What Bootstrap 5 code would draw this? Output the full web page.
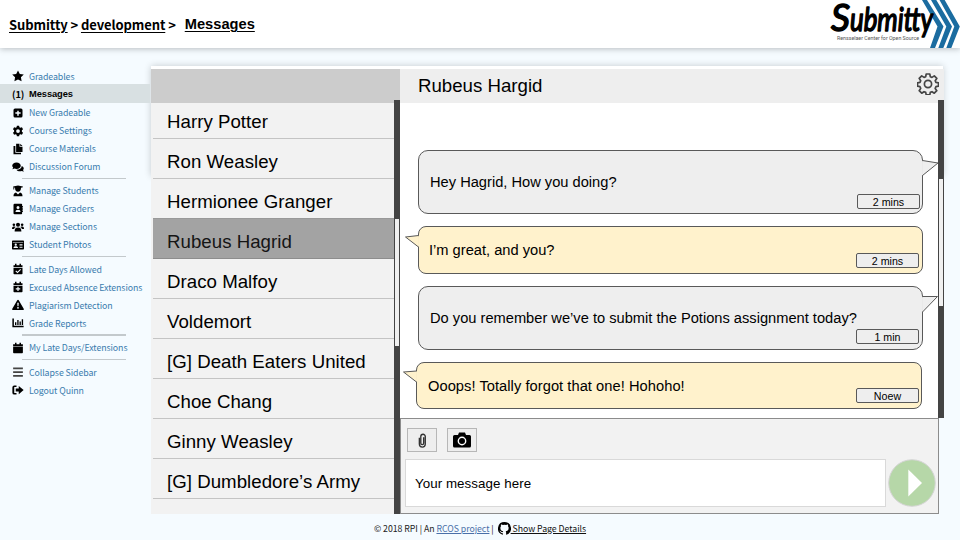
<!DOCTYPE html>
<html lang="en">
<head>
<meta charset="utf-8">
<title>Submitty - Messages</title>
<link href="https://cdn.jsdelivr.net/npm/bootstrap@5.3.0/dist/css/bootstrap.min.css" rel="stylesheet">
<style>
  body{width:960px;height:540px;overflow:hidden;background:#f5fbff;color:#000;font-family:"Liberation Sans",Arial,sans-serif}
  .topbar{height:48px;background:#fff;box-shadow:0 1px 6px rgba(0,0,0,.25);padding-left:9px;font-weight:700}
  .crumbs{font-family:"Noto Sans CJK SC",sans-serif;font-size:13px;letter-spacing:-.09px;line-height:20px;white-space:pre;padding-top:1px}
  .crumbs a,.here{color:#000;text-decoration:underline;text-underline-offset:2px;text-decoration-thickness:1.3px}
  .here{font-size:14.67px;line-height:20px;margin-left:9px}
  .brand{width:132px;height:48px;overflow:visible}
  .side{width:150px;padding-top:19px;flex:none}
  .side a{height:18px;padding:1px 0 0 12px;gap:5px;color:#3a7cae;text-decoration:none;font:8.8px/17px "Noto Sans CJK SC",sans-serif;letter-spacing:-.08px;white-space:nowrap}
  .side a:first-child{height:17px}
  .side a svg{width:12px;height:12px;flex:none;fill:#000}
  .side a.current{background:#d8e0e2;color:#000;font:700 9.33px/18px "Liberation Sans",sans-serif;height:19px;padding-top:0}
  .side a.current span:first-child{width:12px;font-family:"Noto Sans CJK SC",sans-serif}
  .rule{height:6.4px;margin-left:21.5px;width:104.5px;display:flex;align-items:center}
  .rule::before{content:"";width:100%;height:1.2px;background:#c3c9cc}
  .panel{width:793px;height:448px;margin:18px 0 0 1px;padding-top:3px;background:linear-gradient(#fff,#fff) 0 0/792px 4px no-repeat}
  .contacts{width:249px;background:#f2f2f2}
  .panel-shade{box-shadow:0 0 7px rgba(0,0,0,.2);height:110px;width:792px;left:151px;top:66px;z-index:-1}
  .blank{height:34px;background:#ccc}
  .names{padding-left:2px;width:243px}
  .names div{height:40px;border-bottom:1px solid #c4c4c4;padding:4px 0 0 14px;font-size:18.67px;letter-spacing:.03px;line-height:38px;white-space:nowrap}
  .names div:first-child{height:36px;padding-top:0}
  .names .picked{background:#a3a3a3;border-color:#8d8d8d;color:#151515;box-shadow:0 -1px #999}
  .track{width:6px;background:#444;border-left:1px solid #444;border-right:1px solid #444}
  .thumb{height:127px;background:#f0f0f0}
  .track.left{height:414px;margin-top:-3px;padding-top:119px}
  .track.right{height:318px;margin-top:-3px;padding-top:79px}
  .chat-head{height:34px;background:#eee;padding:0 5px 4px 18px;font-size:18.67px}
  .chat-head span{padding-top:4px}
  .stream{width:538px;height:315px;background:#fff;padding:47px 0 0 18px}
  .bubble{width:505px;border:1px solid #595959;border-radius:10px;background:#eee;font-size:14.67px;padding-left:11px;display:flex;align-items:center;position:relative;height:64px;margin-bottom:12px}
  .bubble.theirs{background:#fff2cc;height:48px;border-radius:8px;padding-left:10px}
  .bubble.last{width:506px;height:47px;margin-left:-2px;padding-left:11px;letter-spacing:.05px}
  .bubble .tail{position:absolute;overflow:visible;stroke:#595959;stroke-width:1;fill:#eee}
  .theirs .tail{fill:#fff2cc;left:-14px;top:6px}
  .mine .tail{right:-16px;top:9px}
  .ago{position:absolute;width:63px;height:15px;right:3px;bottom:5px;border:1px solid #595959;border-radius:2px;background:#eee;font-size:10.67px;line-height:14px;text-align:center}
  .bubble:first-child .ago{right:2px;bottom:4px}
  .last .ago{right:2px}
  .composer{width:539px;height:96px;background:#f2f2f2;border:1px solid #8c8c8c;padding:9px 2px 6px 4px}
  .tool{width:30px;height:24px;border:1px solid #b7b7b7;background:#eee;padding:0;margin-left:2px;margin-right:8px;border-radius:0}
  .entry{width:481px;height:48px;border:1px solid #d9d9d9;background:#fff;padding-left:9px;font-size:13.33px;letter-spacing:.06px;line-height:48px;margin-top:7px}
  .send{width:48px;height:48px;margin:7px 0 0 2px}
  .foot{height:25px;font:8.75px/26px "Noto Sans CJK SC",sans-serif;letter-spacing:-.04px;color:#222;white-space:pre;padding-top:4px}
  .foot a{color:#4a6fa8}
  .foot a.details{color:#111;margin-left:2px}
</style>
<script src="https://cdn.jsdelivr.net/npm/bootstrap@5.3.0/dist/js/bootstrap.bundle.min.js"></script>
</head>
<body>
<div class="panel-shade position-absolute"></div>
<header class="topbar d-flex align-items-center justify-content-between position-relative">
  <div class="d-flex align-items-center">
    <div class="crumbs"><a href="#">Submitty</a> &gt; <a href="#">development</a> &gt;</div>
    <a class="here" href="#">Messages</a>
  </div>
  <svg class="brand" viewBox="0 0 132 48">
    <g fill="#1b6ca0">
      <path d="M94 0h5l16.500 26.500L107 48h-5l7.500-21.500z"/>
      <path d="M103 0h5.300L124 26.500 115.300 48h-5l8-21.500z"/>
      <path d="M111.500 0h5.200L131.800 26.500 123.300 48h-5l8-21.500z"/>
    </g>
    <g font-family="Lato" font-style="italic" font-weight="400" stroke="#000" stroke-width="1.500" stroke-linejoin="round">
      <text x="3" y="31" font-size="37" textLength="19" lengthAdjust="spacingAndGlyphs">S</text>
      <text x="22" y="31" font-size="32" textLength="83" lengthAdjust="spacingAndGlyphs">ubmitty</text>
    </g>
    <text x="9" y="40" font-family="Roboto" font-size="5.300" font-weight="400" fill="#555" textLength="82">Rensselaer Center for Open Source</text>
  </svg>
</header>
<div class="d-flex">
  <nav class="side d-flex flex-column">
    <a href="#" class="d-flex align-items-center"><svg viewBox="0 0 16 16"><path d="M8 .5l2.400 4.800 5.300.8-3.800 3.700.9 5.300L8 12.600l-4.800 2.500.9-5.300L.3 6.100l5.300-.8z"/></svg>Gradeables</a>
    <a href="#" class="d-flex align-items-center current"><span>(1)</span><span>Messages</span></a>
    <a href="#" class="d-flex align-items-center"><svg viewBox="0 0 16 16"><path fill-rule="evenodd" d="M4 2h8q2 0 2 2v8q0 2-2 2H4q-2 0-2-2V4q0-2 2-2zm3 3v2H4.500v2H7v2.500h2V9h2.500V7H9V5z"/></svg>New Gradeable</a>
    <a href="#" class="d-flex align-items-center"><svg viewBox="0 0 16 16"><path fill-rule="evenodd" d="M6.500 1h3l.4 2 1.300.7 2-.7 1.500 2.600-1.500 1.400v2l1.500 1.400-1.500 2.600-2-.7-1.300.7-.4 2h-3l-.4-2-1.300-.7-2 .7-1.500-2.600L2.800 9V7L1.300 5.600 2.800 3l2 .7L6.100 3zM8 5.500a2.500 2.500 0 100 5 2.500 2.500 0 000-5z"/></svg>Course Settings</a>
    <a href="#" class="d-flex align-items-center"><svg viewBox="0 0 16 16"><path d="M5.500 1H10v4h4v7H5.500zM11 1l3 3h-3zM2 4h2.500v9H12v2H2z"/></svg>Course Materials</a>
    <a href="#" class="d-flex align-items-center"><svg viewBox="0 0 16 16"><path d="M6 2c3.300 0 5.700 1.900 5.700 4.200S9.300 10.500 6 10.500c-1 0-2-.2-2.800-.5L.5 11l1.100-2.300C.9 8 .3 7.100.3 6.200.3 3.900 2.700 2 6 2zM13 6.500c1.600.7 2.700 1.900 2.700 3.300 0 .8-.4 1.600-1 2.200l1 2.300-2.600-1c-3 1-5.900.1-7.200-1.800 4.200 0 7-2 7.100-5z"/></svg>Discussion Forum</a>
    <div class="rule"></div>
    <a href="#" class="d-flex align-items-center"><svg viewBox="0 0 16 16"><path d="M1.500 2L8 .5 14.500 2v1L12 3.500C12 7 10.500 9 8 9S4 7 4 3.500L3 3.300V6H1.800V3zM2 15c0-3 1-4.500 3.300-5L8 12.500l2.700-2.500C13 10.500 14 12 14 15z"/></svg>Manage Students</a>
    <a href="#" class="d-flex align-items-center"><svg viewBox="0 0 16 16"><path fill-rule="evenodd" d="M3.500 1h9q1 0 1 1v2h1v2h-1v1h1v2h-1v1h1v2h-1v2q0 1-1 1h-9q-1.500 0-1.500-1.500v-11Q2 1 3.500 1zM8 4a2 2 0 100 4 2 2 0 000-4zm-3.300 8h6.600c0-2-1-3-3.300-3s-3.300 1-3.300 3z"/></svg>Manage Graders</a>
    <a href="#" class="d-flex align-items-center"><svg viewBox="1 0 14 16"><circle cx="8" cy="5" r="2.700"/><circle cx="2.500" cy="5" r="1.700"/><circle cx="13.500" cy="5" r="1.700"/><path d="M3.500 14c0-4 1-5.500 4.500-5.500s4.500 1.500 4.500 5.500zM0 10.500c0-2.500.8-3.300 3.500-3.300L5 8c-1.300.6-2 1.500-2 2.500zM16 10.500c0-2.500-.8-3.300-3.500-3.300L11 8c1.300.6 2 1.500 2 2.500z"/></svg>Manage Sections</a>
    <a href="#" class="d-flex align-items-center"><svg viewBox="0.500 0 15 16"><path fill-rule="evenodd" d="M1 2h14q1 0 1 1v10q0 1-1 1H1q-1 0-1-1V3q0-1 1-1zm0 2v.8h14V4zm4 2a1.500 1.500 0 100 3 1.500 1.500 0 000-3zm-3 6h6c0-1.700-1-2.300-3-2.300s-3 .6-3 2.300zm8-5.500v1h4v-1zm0 2v1h4v-1zm0 2v1h4v-1z"/></svg>Student Photos</a>
    <div class="rule"></div>
    <a href="#" class="d-flex align-items-center"><svg viewBox="0 0 16 16"><path fill-rule="evenodd" d="M4 1h2v2h4V1h2v2h2v2.500H2V3h2zM2 6.500h12V14q0 1-1 1H3q-1 0-1-1zm9 1.500l-3.700 3.500L5.500 10l-1 1 2.800 2.500L12 9z"/></svg>Late Days Allowed</a>
    <a href="#" class="d-flex align-items-center"><svg viewBox="0 0 16 16"><path fill-rule="evenodd" d="M4 1h2v2h4V1h2v2h2v2.500H2V3h2zM2 6.500h12V14q0 1-1 1H3q-1 0-1-1zm5.200 1.300v2H5v1.500h2.200v2h1.600v-2H11V9.800H8.800v-2z"/></svg>Excused Absence Extensions</a>
    <a href="#" class="d-flex align-items-center"><svg viewBox="0.500 0 15 16"><path fill-rule="evenodd" d="M8 1q.7 0 1 .6l6.800 11.600Q16 14.500 15 14.500H1q-1-.2-.8-1.300L7 1.600Q7.300 1 8 1zM7 5l.3 4.500h1.400L9 5zm1 5.500a1.200 1.200 0 100 2.400 1.200 1.200 0 000-2.400z"/></svg>Plagiarism Detection</a>
    <a href="#" class="d-flex align-items-center"><svg viewBox="0 0 16 16"><path d="M.5 2h2v9.500h13v2H.5zM4 7h1.800v3.500H4zM7 4h1.800v6.500H7zM10 6h1.800v4.500H10zM13 3h1.800v7.500H13z"/></svg>Grade Reports</a>
    <div class="rule"></div>
    <a href="#" class="d-flex align-items-center"><svg viewBox="0 0 16 16"><path d="M4 1h2v2h4V1h2v2h2.500v2.500h-13V3H4zM1.500 6.200h13V14q0 1-1 1h-11q-1 0-1-1z"/></svg>My Late Days/Extensions</a>
    <div class="rule"></div>
    <a href="#" class="d-flex align-items-center"><svg viewBox="0 0 16 16"><path fill="#444" d="M1.500 2h13v2.300h-13zM1.500 7h13v2.300h-13zM1.500 12h13v2.300h-13z"/></svg>Collapse Sidebar</a>
    <a href="#" class="d-flex align-items-center"><svg viewBox="0 0 16 16"><path d="M6 2v2H3v8h3v2H3q-2.500 0-2.500-2.500v-7Q.5 2 3 2zM9 2.500L15.500 8 9 13.500V10H5V6h4z"/></svg>Logout Quinn</a>
  </nav>
  <main class="panel d-flex">
    <section class="contacts d-flex flex-column">
      <div class="blank"></div>
      <div class="d-flex">
        <div class="names">
          <div>Harry Potter</div><div>Ron Weasley</div><div>Hermionee Granger</div><div class="picked">Rubeus Hagrid</div><div>Draco Malfoy</div><div>Voldemort</div><div>[G] Death Eaters United</div><div>Choe Chang</div><div>Ginny Weasley</div><div>[G] Dumbledore’s Army</div>
        </div>
        <div class="track left"><div class="thumb"></div></div>
      </div>
    </section>
    <section>
      <div class="chat-head d-flex align-items-center justify-content-between"><span>Rubeus Hargid</span>
        <svg width="22" height="22" viewBox="0 0 22 22" fill="none" stroke="#444" stroke-width="1.700" stroke-linejoin="round"><path d="M9.200 1h3.600l.5 2.700 1.700.7 2.300-1.500 2.500 2.500-1.600 2.300.7 1.700 2.600.4v3.400l-2.600.5-.7 1.700 1.600 2.300-2.500 2.500-2.300-1.500-1.700.7-.5 2.500H9.200l-.5-2.500-1.700-.7-2.300 1.500-2.500-2.500 1.500-2.300-.7-1.700-2.500-.5V9.800l2.500-.4.7-1.700-1.500-2.300 2.500-2.500L7 4.400l1.700-.7z"/><circle cx="11" cy="11" r="3.600"/></svg>
      </div>
      <div class="d-flex">
        <div class="stream">
          <div class="bubble mine"><svg class="tail" width="16" height="16"><path d="M.5.500L16 3 .5 15.500"/><path d="M.2 1.200v13.700" stroke="#eee" stroke-width="1.500"/></svg>Hey Hagrid, How you doing?<span class="ago">2 mins</span></div>
          <div class="bubble theirs"><svg class="tail" width="14" height="14"><path d="M13.500 2.500L.5 4l13 10"/><path d="M13.800 3.200v10" stroke="#fff2cc" stroke-width="1.500"/></svg>I’m great, and you?<span class="ago">2 mins</span></div>
          <div class="bubble mine"><svg class="tail" width="16" height="16"><path d="M.5.500H15.500L.5 16"/><path d="M.2 1.200v14" stroke="#eee" stroke-width="1.500"/></svg>Do you remember we’ve to submit the Potions assignment today?<span class="ago">1 min</span></div>
          <div class="bubble theirs last"><svg class="tail" width="14" height="14"><path d="M13.500 2L.5 3l13 10"/><path d="M13.800 2.700v9.500" stroke="#fff2cc" stroke-width="1.500"/></svg>Ooops! Totally forgot that one! Hohoho!<span class="ago">Noew</span></div>
        </div>
        <div class="track right"><div class="thumb"></div></div>
      </div>
      <div class="composer">
        <div class="d-flex">
          <button class="tool btn d-flex align-items-center justify-content-center"><svg width="9" height="15" viewBox="0 0 10 16" fill="none" stroke="#333" stroke-width="1.500"><path d="M1.500 5v7a3.300 3.300 0 006.600 0V3.500a2.500 2.500 0 00-5 0V11a1.600 1.600 0 003.200 0V4.500"/></svg></button>
          <button class="tool btn d-flex align-items-center justify-content-center"><svg width="18" height="16" viewBox="0 0 18 16"><path d="M6 .5h6l1 2.500h3.500q1.500 0 1.500 1.500V14q0 1.500-1.500 1.500h-15Q0 15.500 0 14V4.500Q0 3 1.500 3H5z"/><circle cx="9" cy="9" r="3.700" stroke="#fff" stroke-width="1.400"/></svg></button>
        </div>
        <div class="d-flex">
          <div class="entry">Your message here</div>
          <svg class="send" viewBox="0 0 48 48"><circle cx="24" cy="24" r="23.300" fill="#b6d7a8" stroke="#d5d5d5"/><path d="M20.300 10.500L34 24 20.300 37.500z" fill="#fff"/></svg>
        </div>
      </div>
    </section>
  </main>
</div>
<footer class="foot d-flex justify-content-center align-items-center">© 2018 RPI | An <a href="#">RCOS project</a> | <a class="details d-flex align-items-center" href="#"><svg width="13" height="13" viewBox="0 0 16 16"><path d="M8 0a8 8 0 00-2.500 15.600c.4.100.5-.2.500-.4v-1.500c-2 .5-2.600-.5-2.800-1-.1-.3-.5-1-.9-1.200-.3-.2-.7-.6 0-.6.7 0 1.100.6 1.300.8.700 1.200 1.900.9 2.400.7.100-.5.300-.9.500-1.100-1.800-.2-3.600-.9-3.600-4 0-.9.300-1.600.8-2.100-.1-.3-.4-1.100.1-2.200 0 0 .7-.2 2.200.8a7.500 7.500 0 014 0c1.500-1 2.200-.8 2.200-.8.400 1.100.2 1.900.1 2.200.5.500.8 1.200.8 2.100 0 3.100-1.900 3.800-3.700 4 .3.300.6.700.6 1.500v2.400c0 .2.100.5.500.4A8 8 0 008 0z"/></svg> Show Page Details</a></footer>
</body>
</html>
